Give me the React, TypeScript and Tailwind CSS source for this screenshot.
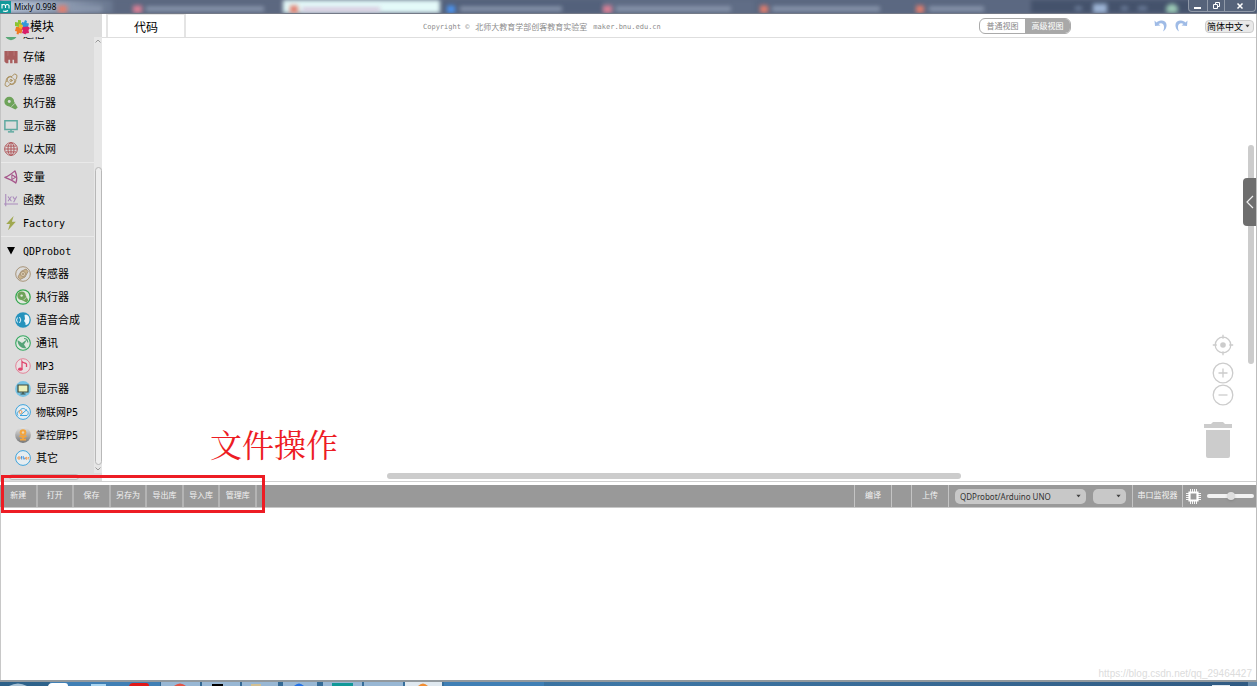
import React from 'react';

type IconName =
  | 'link' | 'disk' | 'sensor' | 'actuator' | 'display' | 'globe' | 'variable' | 'func' | 'bolt'
  | 'sensorRing' | 'actuatorRing' | 'voice' | 'comm' | 'music' | 'screen' | 'iot' | 'robot' | 'other';

const icons: Record<IconName, React.ReactNode> = {
  link: <ellipse cx="8" cy="8" rx="7" ry="7" fill="#5aa878" />,
  disk: (
    <g fill="#a85d5d">
      <path d="M.5 1h15v14h-4v-4H9.700v4H7v-4H5v4H2.500l-2-2z" />
      <path d="M4.500 1v5.500M11.500 1v5.500" stroke="#c08585" strokeWidth=".7" />
    </g>
  ),
  sensor: (
    <g fill="none" stroke="#a88c58" strokeWidth="1.100" strokeLinecap="round">
      <circle cx="8" cy="8.500" r="1.200" />
      <path d="M4.800 10.500A3.500 3.500 0 0 1 9.500 5.200M11.200 6.500A3.500 3.500 0 0 1 6.500 11.800" />
      <path d="M2.500 9.500C2 6 5 3 9 4L12 1l2.500 1.200c.5 1.500.3 3-.5 4.500M13.500 7.500c.5 3.500-2.500 6.500-6.500 5.500L4 15.500 1.500 14.500C1 13 1.300 11.500 2.500 9.500" />
    </g>
  ),
  actuator: (
    <g fill="#6ea35a">
      <path d="M6 .8a5.600 5.600 0 1 0 0 11.200L13 15.500l2.700-2.500L11.600 6.500A5.600 5.600 0 0 0 6 .8z" />
      <circle cx="6" cy="6.300" r="1.700" fill="#dcdcdc" />
      <path d="m8.500 12.300 4-4" fill="none" stroke="#dcdcdc" strokeWidth=".8" />
    </g>
  ),
  display: (
    <g fill="none" stroke="#5fa9a0" strokeWidth="1.700">
      <path d="M1 2h14v10H1zM8 12v2" />
      <path d="M4.500 14.700h7" />
    </g>
  ),
  globe: (
    <g fill="none" stroke="#b0555a" strokeWidth="1.100">
      <circle cx="8" cy="8" r="7.300" />
      <ellipse cx="8" cy="8" rx="3.500" ry="7.300" />
      <path d="M8 1v14M1 8h14M2 4.700h12M2 11.300h12" />
    </g>
  ),
  variable: (
    <g fill="none" stroke="#a5558a" strokeWidth="1.500" strokeLinejoin="round">
      <path d="M1 8.500C5 7 9 4 12.500 1c2 4 2.500 10 1 14C10 12 5 10 1 8.500z" />
      <path d="M9 5.500v5.500l4.500-2.800z" strokeWidth="1.200" />
    </g>
  ),
  func: (
    <g fill="none" stroke="#a98abb" strokeWidth="1.200">
      <path d="M2 1v14M0 12.500h16M4.500 4l4 5.500M8.500 4l-4 5.500M10 4l2 3M14.500 4 11 10.500" />
    </g>
  ),
  bolt: <path d="M11 0 2.500 9.200h4.300L4.500 16.500l9-10H9z" fill="#a0a850" />,
  sensorRing: (
    <g fill="none" stroke="#a89478" strokeWidth="1">
      <circle cx="8" cy="8" r="7.300" />
      <g fill="#c9b28a">
        <path d="M3 11 6 5.500 11 3l2 2.500L10 11l-5 2.500z" />
        <circle cx="8" cy="8" r="2.500" fill="#e4d6bc" />
        <circle cx="8" cy="8" r=".8" />
      </g>
    </g>
  ),
  actuatorRing: (
    <g>
      <circle cx="8" cy="8" r="7.200" fill="#e2e8df" stroke="#35a850" strokeWidth="1.300" />
      <path d="M6.500 2.500a4.200 4.200 0 1 0 0 8.400l5 2.600 2-2L10.700 6.500A4.200 4.200 0 0 0 6.500 2.500z" fill="#6ea35a" />
      <circle cx="6.600" cy="6.600" r="1.200" fill="#e2e8df" />
      <path d="m8.500 11.200 3-3" fill="none" stroke="#e2e8df" strokeWidth=".7" />
    </g>
  ),
  voice: (
    <g>
      <circle cx="8" cy="8" r="7.800" fill="#2693bd" />
      <path d="M9.500 3c3.500-.8 5.300 2 5 5.500-.3 3-2 4.500-4 4.500V11L9 9l1-2z" fill="#eef6fa" />
      <path d="M2.500 5.500a4 4 0 0 0 0 5M4.500 5a4.500 4.500 0 0 1 0 6" fill="none" stroke="#e6f4fa" />
    </g>
  ),
  comm: (
    <g>
      <circle cx="8" cy="8" r="7.300" fill="#dfe8e0" stroke="#35a860" strokeWidth="1.100" />
      <path d="M2.500 5c0 5 3.500 8.500 9 8.500L9 9.500 12.500 4 7 8z" fill="#56a378" />
      <path d="M9 3.500a4 4 0 0 1 3.800 4" fill="none" stroke="#56a378" strokeWidth="1.200" />
    </g>
  ),
  music: (
    <g>
      <circle cx="8" cy="8" r="7.300" fill="#eadfe2" stroke="#e28499" />
      <path d="M7 11V3.500c1 1.700 3.500 1 4.500 2.500v3" fill="none" stroke="#e0456d" strokeWidth="1.300" />
      <ellipse cx="5.300" cy="11.200" rx="2.300" ry="1.600" fill="#e0456d" />
    </g>
  ),
  screen: (
    <g>
      <circle cx="8" cy="8" r="7.900" fill="#77c3e4" />
      <path d="M3 4h10v7H3z" fill="#ecf0bb" stroke="#3e4a3a" strokeWidth="1.200" />
      <path d="M8 11v1.700M5.500 13h5" stroke="#3e4a3a" strokeWidth="1.200" />
    </g>
  ),
  iot: (
    <g fill="none" stroke="#3fa4dc" strokeWidth="1">
      <circle cx="8" cy="8" r="7.400" fill="#e4edf2" />
      <path d="M3 11.500c-2-3 .5-5 2-4.500.5-3 5-3.500 6-.5 2.500 0 3 3.500 1 5H5l7-6" />
      <circle cx="5.500" cy="8" r="1.500" stroke="#ef9a55" />
    </g>
  ),
  robot: (
    <g>
      <circle cx="8" cy="8" r="7.900" fill="url(#robotBg)" />
      <circle cx="8" cy="5.500" r="3.300" fill="#f5a43c" />
      <circle cx="8" cy="5.500" r="1.200" fill="#e8d5b5" />
      <path d="m4.500 9 2 .8h3l2-.8M8 9v3.500M5 12.700h6" stroke="#f5a43c" strokeWidth="1.800" fill="none" />
    </g>
  ),
  other: (
    <g>
      <circle cx="8" cy="8" r="7.400" fill="#e6edf1" stroke="#3fa4dc" />
      <circle cx="4" cy="8" r="1.200" fill="none" stroke="#ef8a3a" strokeWidth=".9" />
      <path d="M6.500 6v3.500M5.800 7.200h1.600M8.300 6v3.500M8.300 8h1.400v1.500" fill="none" stroke="#3f8fdc" strokeWidth=".8" />
      <path d="M10.500 8.200h1.500c0-1.300-1.500-1.300-1.500 0s1 1.300 1.500 1M13.200 9.500V7.500h1" fill="none" stroke="#ef8a3a" strokeWidth=".8" />
    </g>
  ),
};

function CategoryIcon({ name, large }: { name: IconName; large?: boolean }) {
  return (
    <svg viewBox="0 0 16 16" className={large ? 'size-4 shrink-0' : 'size-3.5 shrink-0'} aria-hidden="true">
      {icons[name]}
    </svg>
  );
}

const basic: [IconName, string][] = [
  ['link', '通信'], ['disk', '存储'], ['sensor', '传感器'], ['actuator', '执行器'], ['display', '显示器'], ['globe', '以太网'],
];
const advanced: [IconName, string][] = [['variable', '变量'], ['func', '函数'], ['bolt', 'Factory']];
const robot: [IconName, string][] = [
  ['sensorRing', '传感器'], ['actuatorRing', '执行器'], ['voice', '语音合成'], ['comm', '通讯'], ['music', 'MP3'],
  ['screen', '显示器'], ['iot', '物联网P5'], ['robot', '掌控屏P5'], ['other', '其它'],
];

function Category({ icon, label, nested }: { icon: IconName; label: string; nested?: boolean }) {
  const size = /[A-Z]/.test(label) ? 'pt-0.5 text-[10px]' : 'pt-1 text-[11px]';
  return (
    <li>
      <button type="button" className={`flex h-[23px] w-full items-center whitespace-nowrap ${nested ? 'gap-[5px] pl-3.5' : 'gap-[5px] pl-[3px]'}`}>
        <CategoryIcon name={icon} large={nested} />
        <span className={size}>{label}</span>
      </button>
    </li>
  );
}

function Caret({ className }: { className: string }) {
  return (
    <svg viewBox="0 0 6 4" className={`pointer-events-none absolute top-1/2 h-[3px] w-[5px] -translate-y-1/2 ${className}`} aria-hidden="true">
      <path d="M0 0h6L3 4z" fill="#444" />
    </svg>
  );
}

function TitleBar() {
  return (
    <header className="relative flex h-3.5 shrink-0 items-center justify-between overflow-hidden border-b border-[#747a87] bg-[#5d6a80]">
      <div className="absolute inset-0 flex blur-[2px]" aria-hidden="true">
        <span className="w-[9%] bg-gradient-to-r from-[#c3d0e2] to-[#68768e]" />
        <span className="w-[13.500%] bg-[#5c6880]" />
        <span className="w-[12.500%] bg-[#e4faf9]" />
        <span className="w-[13%] bg-[#53617b]" />
        <span className="w-[12%] bg-[#606d86]" />
        <span className="w-[22%] bg-[#5b6881]" />
        <span className="grow bg-[#44526b]" />
      </div>
      <svg viewBox="0 0 1257 14" preserveAspectRatio="none" className="absolute inset-0 size-full blur-[2px]" aria-hidden="true">
        <g fill="#e27d6d">
          <path d="M58 6h9v8h-9zM290 6h8v8h-8zM760 6h8v8h-8zM916 6h8v8h-8z" />
        </g>
        <path d="M133 6h9v8h-9zM603 6h9v8h-9z" fill="#dc7f95" />
        <path d="M447 6h8v8h-8z" fill="#4b93f0" />
        <path d="M70 7h32v5H70zM146 7h118v5H146zM460 7h102v5H460zM616 7h115v5H616zM772 7h108v5H772zM929 7h55v5h-55z" fill="#8b98ae" />
        <path d="M302 8h78v4h-78z" fill="#d7bfd9" />
        <path d="M1093 4h14v10h-14z" fill="#9db4d5" />
        <path d="M1075 7h7v4h-7zM1121 7h7v4h-7zM1138 7h9v4h-9z" fill="#71829f" />
        <circle cx="1172" cy="10" r="6" fill="#9bc9b5" />
      </svg>
      <div className="relative flex items-center gap-[3px]">
        <svg viewBox="0 0 11 12" className="h-3 w-[11px]" aria-hidden="true">
          <path d="M0 0h11v12H0z" fill="#11999a" />
          <path d="M2 7.500V3M2 4.500q1.700-2 3.500 0V7m0-2.500q1.800-2 3.500 0v3M3 10q3 1 5-.5" fill="none" stroke="#fff" strokeWidth="1.100" />
        </svg>
        <h1 className="font-['Noto_Sans','Open_Sans',sans-serif] text-[8px] leading-3 text-black">Mixly 0.998</h1>
      </div>
      <div className="relative mr-px flex h-3 self-start rounded-b-sm border border-t-0 border-[#9099a8] bg-[#56637a] text-white">
        <button type="button" aria-label="最小化" className="flex w-[18px] items-center justify-center">
          <svg viewBox="0 0 8 8" className="size-2"><path d="M0 5h7v2H0z" fill="#fff" /></svg>
        </button>
        <button type="button" aria-label="还原" className="flex w-[18px] items-center justify-center border-x border-[#9099a8]">
          <svg viewBox="0 0 8 8" className="size-2" fill="none" stroke="#fff"><path d="M1.500 2.500h4v4h-4zM3.500 2.500v-2h4v4h-2" /></svg>
        </button>
        <button type="button" aria-label="关闭" className="flex w-[30px] items-center justify-center">
          <svg viewBox="0 0 8 8" className="size-2"><path d="m1.500 1.500 5 5m0-5-5 5" stroke="#fff" strokeWidth="1.500" /></svg>
        </button>
      </div>
    </header>
  );
}

function PuzzleLogo() {
  return (
    <svg viewBox="0 0 16 16" className="size-4" aria-hidden="true">
      <path d="M1 3l3 .5V1l3 .2-.2 3L9 4v3L5 8 1 7z" fill="#8bc431" />
      <path d="M8 3l2 .6L11 1l2 1-.5 2 2.500.4-1 3.600H9L7.500 6z" fill="#3298da" />
      <path d="M2 8h5l1.500 2-1 4.500L5 14l-.5 1.500-2-.5.5-2.500L1 12z" fill="#ef7a24" />
      <path d="M8 8l6-.5 2 1.500-1.500 2 .5 3-3 .5-.5 1-2-1L8 14l1-3-2-1z" fill="#d81e68" />
      <path d="M5 5l4 1-1 4-3-1z" fill="#f2b52b" />
    </svg>
  );
}

function Sidebar() {
  return (
    <aside className="flex w-[102px] shrink-0 flex-col border-l border-[#c4c4c4] bg-[#dcdcdc]">
      <h2 className="flex h-[23px] shrink-0 items-center pl-[13px] pt-0.5 text-[12px]">
        <PuzzleLogo />
        模块
      </h2>
      <div className="flex min-h-0 grow">
        <nav aria-label="模块" className="flex min-w-0 grow flex-col overflow-hidden">
          <div className="min-h-0 grow overflow-hidden">
            <div className="-mt-[15px]">
              <ul>{basic.map(([i, l]) => <Category key={l} icon={i} label={l} />)}</ul>
              <hr className="my-0.5 border-[#e9e9e9]" />
              <ul>{advanced.map(([i, l]) => <Category key={l} icon={i} label={l} />)}</ul>
              <hr className="my-0.5 border-[#e9e9e9]" />
              <button type="button" aria-expanded="true" className="flex h-[23px] items-center gap-[5px] pl-[3px]">
                <svg viewBox="0 0 14 14" className="size-3.5" aria-hidden="true"><path d="M3 3h8l-4 7.500z" /></svg>
                <span className="pt-0.5 text-[10px]">QDProbot</span>
              </button>
              <ul>{robot.map(([i, l]) => <Category key={l} icon={i} label={l} nested />)}</ul>
            </div>
          </div>
          <div className="flex h-2 shrink-0 items-center px-2"><span className="h-1.5 w-[70px] rounded-sm border border-[#bbb] bg-[#e6e6e6]" /></div>
        </nav>
        <div className="mb-2 flex w-2 shrink-0 flex-col items-center bg-[#e6e6e6]" aria-hidden="true">
          <svg viewBox="0 0 8 8" className="size-2 shrink-0"><path d="M1.500 5.500 4 3l2.500 2.500" fill="none" stroke="#999" /></svg>
          <span className="h-[122px] shrink-0" />
          <span className="w-[7px] grow rounded-sm border border-[#b8b8b8] bg-[#ededed]" />
          <svg viewBox="0 0 8 8" className="size-2 shrink-0"><path d="M1.500 2.500 4 5l2.500-2.500" fill="none" stroke="#999" /></svg>
        </div>
      </div>
    </aside>
  );
}

function EditorHeader() {
  return (
    <div className="flex h-6 shrink-0 items-stretch border-b border-[#dedede] pl-1">
      <button type="button" className="w-20 shrink-0 border-x-2 border-t border-[#e4e4e4] pt-1 text-[12px]">代码</button>
      <p className="ml-[237px] mr-auto flex items-center gap-[6px] whitespace-nowrap pt-1 text-[8px] text-[#8c8c8c]">
        <span className="text-[7px]">Copyright ©</span>
        <span>北师大教育学部创客教育实验室</span>
        <span className="text-[7px]">maker.bnu.edu.cn</span>
      </p>
      <div className="flex items-center pr-0.5 pt-px">
        <div className="flex h-4 overflow-hidden rounded-[6px] border border-[#aaa] text-[8px]">
          <button type="button" className="w-[45px] pt-0.5 text-[#888]">普通视图</button>
          <button type="button" className="w-[45px] bg-[#a8a8a8] pt-0.5 text-white">高级视图</button>
        </div>
        <div className="ml-[83px] mr-px flex gap-1.5">
          <button type="button" aria-label="撤销">
            <svg viewBox="0 0 14 14" className="size-3.5"><path d="M.5 1.500 1 7l5.500-.5L4.500 5C8 3 12 5.500 9 12.500 14.500 9 13.500.5 7 1.500 5 1.800 3.500 2.500 2.500 3.500z" fill="#9fbbe6" /></svg>
          </button>
          <button type="button" aria-label="重做">
            <svg viewBox="0 0 14 14" className="size-3.5"><path d="M13.500 1.500 13 7l-5.500-.5L9.500 5C6 3 2 5.500 5 12.500-.5 9 .5.500 7 1.500c2 .3 3.500 1 4.500 2z" fill="#9fbbe6" /></svg>
          </button>
        </div>
        <div className="relative ml-4">
          <select aria-label="语言" className="block h-[13px] w-[49px] appearance-none rounded-sm border border-[#ccc] bg-[#e9e9e9] px-px pt-px text-[9px] leading-[11px] text-black">
            <option>简体中文</option>
          </select>
          <Caret className="right-1" />
        </div>
      </div>
    </div>
  );
}

function Workspace() {
  return (
    <div className="relative min-h-0 grow bg-white">
      <p className="absolute bottom-4 left-[108px] font-['Noto_Serif_CJK_SC','Noto_Sans_CJK_SC',serif] text-[32px] leading-[44px] text-[#ed1c24]">文件操作</p>
      <span className="absolute bottom-[2px] left-[285px] right-[295px] h-1.5 rounded-full bg-[#ccc]" aria-hidden="true" />
      <span className="absolute right-[2px] top-[107px] bottom-[117px] w-1.5 rounded-full bg-[#ccc]" aria-hidden="true" />
      <button type="button" aria-label="展开侧栏" className="absolute right-0 top-[140px] flex h-12 w-[13px] items-center justify-center rounded-l-sm bg-[#6e6e6e]">
        <svg viewBox="0 0 8 14" className="h-3.5 w-2"><path d="M7 1 1 7l6 6" fill="none" stroke="#eee" strokeWidth="1.200" /></svg>
      </button>
      <div className="absolute bottom-[23px] right-[22px] flex w-[33px] flex-col items-end">
        <div className="mb-4 flex flex-col items-center">
          <button type="button" aria-label="居中" className="mb-1.5">
            <svg viewBox="0 0 22 22" className="block size-[22px]" fill="none" stroke="#ccc" strokeWidth="1.300"><circle cx="11" cy="11" r="7.800" /><circle cx="11" cy="11" r="2.800" fill="#ccc" stroke="none" /><path d="M11 .8v4M11 17.200v4M.8 11h4M17.200 11h4" /></svg>
          </button>
          <button type="button" aria-label="放大">
            <svg viewBox="0 0 22 22" className="block size-[22px]" fill="none" stroke="#ccc" strokeWidth="1.300"><circle cx="11" cy="11" r="9.800" /><path d="M11 6.500v9M6.500 11h9" /></svg>
          </button>
          <button type="button" aria-label="缩小">
            <svg viewBox="0 0 22 22" className="block size-[22px]" fill="none" stroke="#ccc" strokeWidth="1.300"><circle cx="11" cy="11" r="9.800" /><path d="M6.500 11h9" /></svg>
          </button>
        </div>
        <button type="button" aria-label="垃圾桶" className="self-center">
          <svg viewBox="0 0 28 36" className="block h-9 w-7" fill="#ccc"><path d="M0 2h7l2-2h10l2 2h7v4H0zM2 8h24v26a2 2 0 0 1-2 2H4a2 2 0 0 1-2-2z" /></svg>
        </button>
      </div>
    </div>
  );
}

const fileActions = ['新建', '打开', '保存', '另存为', '导出库', '导入库', '管理库'];

function Toolbar() {
  return (
    <div className="relative mt-[3px] flex h-[22px] shrink-0 items-stretch justify-between bg-[#999] pl-px text-[8px] text-[#f2f2f2]">
      <div className="grid w-64 grid-cols-7">
        {fileActions.map((a) => (
          <button key={a} type="button" className="whitespace-nowrap border-r-2 border-[#b4b4b4]">{a}</button>
        ))}
      </div>
      <span className="pointer-events-none absolute -top-2.5 left-px h-[38px] w-[264px] border-[3px] border-[#ed1c24]" aria-hidden="true" />
      <div className="flex items-stretch pr-0.5">
        <button type="button" className="w-[38px] border-x border-[#c4c4c4]">编译</button>
        <span className="w-[19px]" />
        <button type="button" className="w-[38px] border-x border-[#c4c4c4]">上传</button>
        <div className="flex items-center gap-[7px] px-1.5">
          <div className="relative">
            <select aria-label="开发板" className="block h-[15px] w-[131px] appearance-none rounded-[5px] bg-[#c8c8c8] px-[5px] font-['Noto_Sans','Open_Sans',sans-serif] text-[8px] leading-[15px] text-[#333]">
              <option>QDProbot/Arduino UNO</option>
            </select>
            <Caret className="right-[5px]" />
          </div>
          <div className="relative">
            <select aria-label="串口" className="block h-[15px] w-[33px] appearance-none rounded-[5px] bg-[#c8c8c8]">
              <option value="" />
            </select>
            <Caret className="right-[5px]" />
          </div>
        </div>
        <button type="button" className="w-[51px] whitespace-nowrap border-x border-[#c4c4c4]">串口监视器</button>
        <div className="flex items-center gap-1.5 pl-[3px]">
          <svg viewBox="0 0 15 15" className="size-[15px]" aria-hidden="true">
            <path d="M3.500 3.500h8v8h-8z" fill="none" stroke="#fff" strokeWidth="2.200" />
            <path d="M4.500 0v3M6.500 0v3M8.500 0v3M10.500 0v3M4.500 12v3M6.500 12v3M8.500 12v3M10.500 12v3M0 4.500h3M0 6.500h3M0 8.500h3M0 10.500h3M12 4.500h3M12 6.500h3M12 8.500h3M12 10.500h3" stroke="#fff" strokeWidth=".9" />
          </svg>
          <input type="range" aria-label="缩放" defaultValue={50} className="h-1 w-[47px] appearance-none rounded-full bg-[#f2f2f2] [&::-webkit-slider-thumb]:size-2 [&::-webkit-slider-thumb]:appearance-none [&::-webkit-slider-thumb]:rounded-full [&::-webkit-slider-thumb]:bg-[#dedede] [&::-webkit-slider-thumb]:shadow" />
        </div>
      </div>
    </div>
  );
}

function Taskbar() {
  return (
    <footer className="h-1.5 shrink-0 border-t-2 border-[#92999e] bg-gradient-to-r from-[#2d6189] via-[#3d76a5] to-[#305a82]" aria-hidden="true">
      <svg viewBox="0 0 1257 4" preserveAspectRatio="none" className="block h-1 w-full">
        <path d="M50 0h110v4H50zM444 0h100v4H444z" fill="#3f7fb5" />
        <path d="M161 0h39v4h-39zM202 0h38v4h-38zM242 0h36v4h-36zM283 0h34v4h-34zM323 0h39v4h-39zM364 0h39v4h-39z" fill="#98b7d4" />
        <path d="M405 0h37v4h-37z" fill="#dfe8ef" />
        <path d="M9 4q9-5 18 0z" fill="#a8c2d5" />
        <path d="M48 4q1-3 4-3h13q3 0 3 3z" fill="#fff" />
        <path d="M91 2h15v2H91z" fill="#a8d4f0" />
        <path d="M129 4q1-3 4-3h13q3 0 3 3z" fill="#e01818" />
        <path d="M174 4q6-5 12 0z" fill="#e35343" />
        <path d="M212 2h11v2h-11z" fill="#000" />
        <path d="M251 2h10v2h-10z" fill="#d1bf92" />
        <path d="M294 4q5-5 10 0z" fill="#2372e6" />
        <path d="M332 1h21v3h-21z" fill="#119898" />
        <path d="M418 4q5-5 10 0z" fill="#f08d33" />
        <path d="M1212 3h18v1h-18z" fill="#dce6ee" />
        <path d="M1248 0h9v4h-9z" fill="#6488a8" />
      </svg>
    </footer>
  );
}

export default function App() {
  return (
    <div className="flex h-screen flex-col overflow-hidden bg-white font-['DejaVu_Sans_Mono','Noto_Sans_CJK_SC',monospace] text-black">
      <svg className="absolute size-0" aria-hidden="true">
        <defs>
          <linearGradient id="robotBg" x1="0" y1="0" x2="0" y2="1">
            <stop offset="0" stopColor="#e4e4e4" />
            <stop offset="1" stopColor="#777" />
          </linearGradient>
        </defs>
      </svg>
      <TitleBar />
      <main className="flex min-h-0 grow flex-col border-r border-[#bdbdbd]">
        <div className="flex min-h-0 grow border-b border-[#cfcfcf]">
          <Sidebar />
          <section className="flex min-w-0 grow flex-col">
            <EditorHeader />
            <Workspace />
          </section>
        </div>
        <Toolbar />
        <section aria-label="输出" className="flex h-[173px] shrink-0 items-end justify-end border-l border-t border-[#c8c8c8] pr-1">
          <p className="font-['Liberation_Sans',sans-serif] text-[10px] leading-3 text-[#dcdcdc]">https://blog.csdn.net/qq_29464427</p>
        </section>
      </main>
      <Taskbar />
    </div>
  );
}
